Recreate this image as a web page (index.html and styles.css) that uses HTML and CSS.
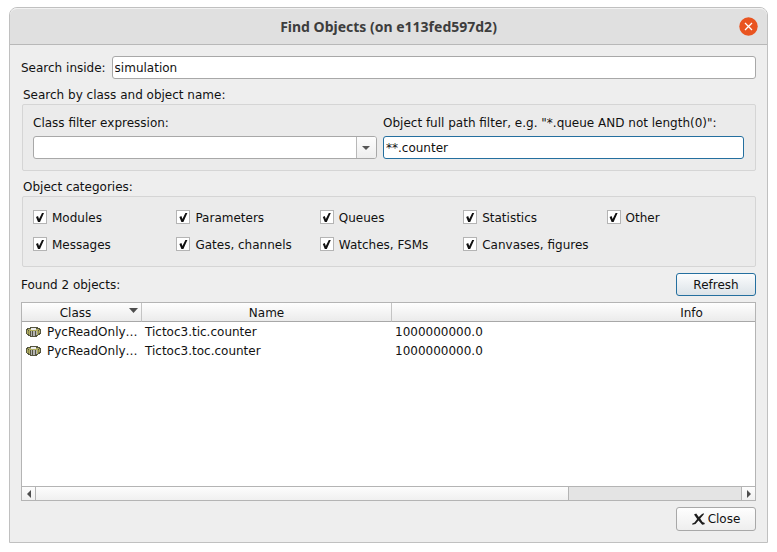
FILE: index.html
```html
<!DOCTYPE html>
<html lang="en">
<head>
<meta charset="utf-8">
<title>Find Objects</title>
<link rel="stylesheet" href="styles.css">
</head>
<body>
<svg class="symbols" aria-hidden="true">
  <symbol id="object-icon" viewBox="0 0 15 11">
    <g shape-rendering="crispEdges">
      <path fill="#55553f" d="M4 1h8v1h2v1h1v5h-1v1h-2v1h-1v1H4v-1H2V9H1V8H0V3h1V2h3z"/>
      <path fill="#b0ad60" d="M2 3h3v1H2zM10 3h3v1h-3zM1 4h1v4H1zM3 4h1v5H3zM11 4h1v5h-1zM13 4h1v3h-1zM4 4h7v1H4z"/>
      <path fill="#ececec" d="M5 2h5v2H5z"/>
      <path fill="#b4b4b4" d="M5 5h1v5H5zM7 5h2v5H7zM10 5h1v4h-1z"/>
      <path fill="#8b8850" d="M2 5h1v3H2zM12 5h1v3h-1z"/>
    </g>
  </symbol>
</svg>
<main class="window">
  <header class="titlebar">
    <h1 class="title">Find Objects (on e113fed597d2)</h1>
    <button class="window-close" type="button" aria-label="Close window">
      <svg viewBox="0 0 19 19" width="19" height="19"><circle cx="9.500" cy="9.500" r="9.200" fill="#e95420"/><path d="M6 6l7 7M13 6l-7 7" stroke="#fff" stroke-width="1.300"/></svg>
    </button>
  </header>
  <form class="content">
    <div class="search-row">
      <label for="inside">Search inside:</label>
      <input class="field" id="inside" type="text" value="simulation">
    </div>
    <section class="section">
      <h2 class="caption">Search by class and object name:</h2>
      <div class="group filters">
        <div class="filter">
          <label for="class-filter">Class filter expression:</label>
          <div class="combo">
            <select class="field" id="class-filter"><option></option></select>
            <span class="combo-arrow"><svg viewBox="0 0 8 4" width="8" height="4"><path d="M0 0h8L4 4z" fill="#555"/></svg></span>
          </div>
        </div>
        <div class="filter">
          <label for="path-filter">Object full path filter, e.g. "*.queue AND not length(0)":</label>
          <input class="field focused" id="path-filter" type="text" value="**.counter">
        </div>
      </div>
    </section>
    <section class="section">
      <h2 class="caption">Object categories:</h2>
      <div class="group categories">
        <label class="check"><input type="checkbox" checked>Modules</label>
        <label class="check"><input type="checkbox" checked>Parameters</label>
        <label class="check"><input type="checkbox" checked>Queues</label>
        <label class="check"><input type="checkbox" checked>Statistics</label>
        <label class="check"><input type="checkbox" checked>Other</label>
        <label class="check"><input type="checkbox" checked>Messages</label>
        <label class="check"><input type="checkbox" checked>Gates, channels</label>
        <label class="check"><input type="checkbox" checked>Watches, FSMs</label>
        <label class="check"><input type="checkbox" checked>Canvases, figures</label>
      </div>
    </section>
    <div class="found-row">
      <p class="found">Found 2 objects:</p>
      <button class="button default" type="button">Refresh</button>
    </div>
    <div class="results">
      <div class="viewport">
        <table class="table">
          <colgroup><col class="col-class"><col class="col-name"><col class="col-info"></colgroup>
          <thead>
            <tr>
              <th><span class="sortable"><span class="sort-label">Class</span><svg viewBox="0 0 9 5" width="9" height="5"><path d="M0 0h9L4.500 5z" fill="#4d4d4d"/></svg></span></th>
              <th>Name</th>
              <th>Info</th>
            </tr>
          </thead>
          <tbody>
            <tr>
              <td><span class="object"><svg width="15" height="11"><use href="#object-icon"/></svg>PycReadOnly…</span></td>
              <td>Tictoc3.tic.counter</td>
              <td>1000000000.0</td>
            </tr>
            <tr>
              <td><span class="object"><svg width="15" height="11"><use href="#object-icon"/></svg>PycReadOnly…</span></td>
              <td>Tictoc3.toc.counter</td>
              <td>1000000000.0</td>
            </tr>
          </tbody>
        </table>
      </div>
      <div class="scrollbar">
        <button class="step" type="button" aria-label="Scroll left"><svg viewBox="0 0 4 8" width="4" height="8"><path d="M4 0v8L0 4z" fill="#4d4d4d"/></svg></button>
        <div class="track"><div class="thumb"></div></div>
        <button class="step" type="button" aria-label="Scroll right"><svg viewBox="0 0 4 8" width="4" height="8"><path d="M0 0v8l4-4z" fill="#4d4d4d"/></svg></button>
      </div>
    </div>
    <footer class="actions">
      <button class="button" type="button">
        <svg viewBox="0 0 13 12" width="13" height="12"><path fill="#1c1c1c" d="M2 1.500L4.200.5 6.800 4 10 1l2-.8-.3 1.300L8.200 5.500 10.500 9l2.300 1-.3 1.200-2.300.5L6.500 7.500 3.500 11 .3 11.800V10.500L2.500 9.500 5.200 6z"/></svg>Close
      </button>
    </footer>
  </form>
</main>
</body>
</html>
```
FILE: styles.css
```css
* {
  box-sizing: border-box;
}

body {
  display: flex;
  min-height: 100vh;
  margin: 0;
  padding: 7px 9px 9px;
  background: #fff;
  color: #111;
  font: 12px/16px "DejaVu Sans", sans-serif;
}

h1, h2, p {
  margin: 0;
}

button, input, select {
  margin: 0;
  color: inherit;
  font: inherit;
}

svg {
  display: block;
  flex: none;
}

.symbols {
  position: absolute;
  width: 0;
  height: 0;
}

.window {
  display: flex;
  flex: 1;
  flex-direction: column;
  min-width: 0;
  border: 1px solid #c0c0c0;
  border-radius: 8px 8px 0 0;
  background: #eeeeee;
}

.titlebar {
  display: grid;
  grid-template-columns: 1fr auto 1fr;
  align-items: center;
  height: 37px;
  padding: 0 9px;
  border-top: 1px solid #f2f2f2;
  border-bottom: 1px solid #b8b8b8;
  border-radius: 7px 7px 0 0;
  background: #e0e0e0;
}

.title {
  grid-column: 2;
  color: #3d3d3d;
  font: 700 14px/20px "Noto Sans", sans-serif;
}

.window-close {
  justify-self: end;
  padding: 0;
  border: 0;
  background: none;
}

.content {
  display: flex;
  flex: 1;
  flex-direction: column;
  padding: 11px;
}

.search-row {
  display: flex;
  align-items: center;
  gap: 6px;
}

.field {
  flex: 1;
  width: 100%;
  min-width: 0;
  height: 23px;
  padding: 0 2px;
  border: 1px solid #a8a8a8;
  border-radius: 3px;
  outline: 0;
  background: #fff;
  appearance: none;
}

.field.focused {
  border-color: #246f9f;
}

.section {
  margin: 8px 0 0 1px;
}

.caption {
  margin: 0 1px 1px;
  font: inherit;
}

.group {
  display: grid;
  padding: 10px 11px 11px 10px;
  gap: 6px;
  border: 1px solid #d5d5d5;
  border-radius: 2px;
  background: #ebebeb;
}

.filters {
  grid-template-columns: 344fr 361fr;
}

.filter {
  display: grid;
  gap: 5px;
}

.combo {
  display: flex;
  position: relative;
}

.combo-arrow {
  display: flex;
  position: absolute;
  inset: 1px 1px 1px auto;
  align-items: center;
  justify-content: center;
  width: 20px;
  padding-right: 2px;
  border-left: 1px solid #b8b8b8;
  border-radius: 0 2px 2px 0;
  background: linear-gradient(#fdfdfd, #eeeeee);
  pointer-events: none;
}

.categories {
  grid-template-columns: repeat(5, 1fr);
}

.check {
  display: flex;
  align-items: flex-start;
  gap: 5px;
  height: 21px;
  padding-top: 3px;
  white-space: nowrap;
}

.check input {
  width: 14px;
  height: 14px;
  border: 1px solid #b4b4b4;
  background: #fff;
  appearance: none;
}

.check input:checked::before {
  display: block;
  width: 12px;
  height: 12px;
  background: #111;
  clip-path: polygon(2px 6px, 4px 5px, 5px 8px, 8px 2px, 10px 2px, 6px 11px, 4px 11px);
  content: "";
}

.found-row {
  display: flex;
  align-items: center;
  justify-content: space-between;
  margin: 6px 0;
}

.button {
  display: flex;
  align-items: center;
  justify-content: center;
  gap: 3px;
  width: 80px;
  height: 24px;
  padding: 0;
  border: 1px solid #a8a8a8;
  border-radius: 3px;
  background: linear-gradient(#fefefe, #eeeeee);
  line-height: 18px;
}

.button.default {
  height: 23px;
  border-color: #246f9f;
  background: linear-gradient(#fbfcfd, #dce3e8);
  line-height: 16px;
}

.results {
  display: flex;
  flex: 1;
  flex-direction: column;
  border: 1px solid #b4b4b4;
  background: #fff;
}

.viewport {
  flex: 1;
  width: 100%;
  overflow: hidden;
  contain: inline-size;
}

.table {
  width: 970px;
  table-layout: fixed;
  border-collapse: separate;
  border-spacing: 0;
}

.col-class {
  width: 120px;
}

.col-name {
  width: 250px;
}

.table th {
  height: 19px;
  padding: 2px 0 0;
  border-right: 1px solid #c4c4c4;
  border-bottom: 1px solid #a8a8a8;
  background: linear-gradient(#fefefe, #ebebeb);
  font-weight: 400;
}

.table td {
  height: 19px;
  padding: 0 3px;
  white-space: nowrap;
}

.sortable {
  display: flex;
  padding-right: 3px;
}

.sort-label {
  flex: 1;
}

.sortable svg {
  margin-top: 3px;
}

.object {
  display: flex;
  align-items: center;
  gap: 6px;
  padding-left: 1px;
}

.scrollbar {
  display: flex;
  height: 14px;
  border-top: 1px solid #b4b4b4;
}

.step {
  display: flex;
  align-items: center;
  justify-content: center;
  width: 13px;
  padding: 0;
  border: 0;
  background: linear-gradient(#fdfdfd, #f0f0f0);
}

.track {
  flex: 1;
  border: solid #b4b4b4;
  border-width: 0 1px;
  background: #e4e4e4;
}

.thumb {
  width: 75.600%;
  height: 100%;
  border-right: 1px solid #b4b4b4;
  background: linear-gradient(#fdfdfd, #f0f0f0);
}

.actions {
  display: flex;
  justify-content: flex-end;
  margin-top: 6px;
}
```
